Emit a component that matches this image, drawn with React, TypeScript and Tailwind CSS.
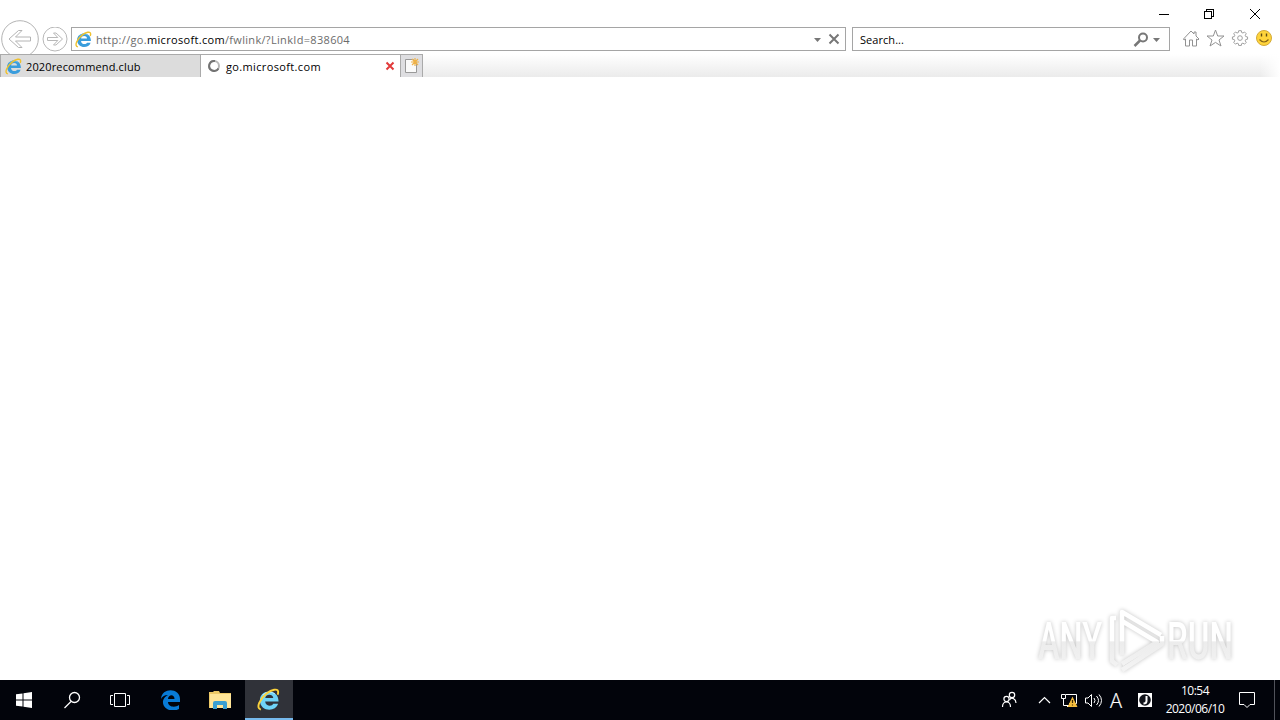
import type { ReactNode } from "react";

function IeIcon({ size, bright = false }: { size: number; bright?: boolean }) {
  const blue = bright ? "#6fd3f7" : "#3a9ddc";
  return (
    <svg width={size} height={size} viewBox="0 0 24 24" fill="none" className="shrink-0">
      <path
        d="M22.500 14H8.500C9 19 15.500 19.800 17 16.500H22C19.500 25.500 3 25 3 12.800C3 .500 22.500 0 22.500 14ZM8.600 10.500H17C16.500 6 9.200 6 8.600 10.500Z"
        fill={blue}
        fillRule="evenodd"
      />
      <path d="M6 7.500C9 4 15 3.500 18.500 6" stroke={bright ? "#b5ecff" : "#68bdec"} strokeWidth="1.2" />
      <path
        d="M4 22.5C-2 21 3.500 11 10 5.800C15.500 1.500 21.500 .3 22 3.500C22.200 4.600 22 6 21.500 7"
        stroke={bright ? "#fbd23c" : "#efc12d"}
        strokeWidth="2"
      />
    </svg>
  );
}

function Header() {
  return (
    <header className="h-[54px] bg-white">
      <div className="flex h-[27px] justify-end">
        <svg width="122" height="27" viewBox="-4 0 122 27" fill="none" stroke="#000" shapeRendering="crispEdges">
          <path d="M-3 14.500H7" />
          <path d="M42.500 11.500h7v7h-7zM44.500 11v-2h7v7h-2" />
          <path d="M88 9l10 10M98 9L88 19" shapeRendering="auto" />
        </svg>
      </div>
      <div className="flex h-[27px] items-start">
        <div className="flex w-[71px] shrink-0">
          <svg width="40" height="34" viewBox="0 0 40 34" fill="none" stroke="#b4b4b4" className="-mt-[7px]">
            <circle cx="20" cy="19" r="18.300" />
            <path d="M9 19l9.500-8.500h3.500l-6.500 6.500h15v4h-15l6.500 6.500h-3.500z" />
          </svg>
          <svg width="30" height="27" viewBox="0 0 30 27" fill="none" stroke="#b8b8b8">
            <circle cx="15" cy="12" r="12" />
            <path d="M22.500 12l-6.500-6h-2.500l4.300 4.500H7.500v3h10.300L13.500 18H16z" />
          </svg>
        </div>
        <div className="flex h-6 w-[775px] shrink-0 items-center border border-[#a5a5a5] pl-[3px]">
          <IeIcon size={17} />
          <span className="ml-1 mt-0.5 whitespace-nowrap text-[11px] tracking-[0.32px] text-[#6b6b6b]">
            http://go.<span className="text-black">microsoft.com</span>/fwlink/?LinkId=838604
          </span>
          <svg width="37" height="22" className="ml-auto" fill="none" stroke="#777">
            <path d="M6 10h7l-3.500 4z" fill="#777" stroke="none" />
            <path d="M21.500 6.500l9 9M30.500 6.500l-9 9" strokeWidth="2" />
          </svg>
        </div>
        <div className="ml-1.5 flex h-6 w-[318px] shrink-0 items-center border border-[#a5a5a5] pl-[7px] text-[11px] text-black">
          <span className="mt-0.5 tracking-[0.05px]">Search...</span>
          <svg width="42" height="22" className="ml-auto" fill="none" stroke="#777">
            <circle cx="16" cy="9.500" r="4" strokeWidth="2" />
            <path d="M13 12.500L7.500 18" strokeWidth="2.500" />
            <path d="M26 10h7l-3.500 4z" fill="#777" stroke="none" />
          </svg>
        </div>
        <Tools />
      </div>
    </header>
  );
}

function Tools() {
  return (
    <svg width="110" height="27" viewBox="0 0 110 27" fill="none" stroke="#929292">
      <path d="M13.500 12l7.500-8 3 3V5h2v4l3 3-1 1-1.500-1v7h-4v-6h-3v6h-4v-7l-1.500 1z" />
      <path d="M45.500 3l2.200 6h6.300l-5 4 2 6-5.500-3.600-5.500 3.600 2-6-5-4h6.300z" />
      <g transform="translate(70 10.200) scale(.87)">
        <path d="M-1.500-7.500h3l.4 2.100 1.500.6 1.800-1.200 2 2-1.200 1.800.6 1.500 2.100.4v2.600l-2.100.4-.6 1.500 1.200 1.800-2 2-1.800-1.200-1.500.6-.4 2.100h-3l-.4-2.100-1.500-.6-1.800 1.200-2-2L-6 4.200l-.6-1.500-2.100-.4V-.3l2.100-.4.600-1.500L-7.200-4l2-2 1.800 1.200 1.500-.6z" />
        <circle cy="1" r="2.700" />
      </g>
      <circle cx="94" cy="11" r="7.500" fill="#ffd43b" stroke="#d3aa3a" />
      <path d="M91.500 6.500v3M96.500 6.500v3" stroke="#604b12" strokeWidth="1.400" />
      <path d="M89.500 12.500q4.500 5 9 0" stroke="#866416" strokeWidth="1.200" />
    </svg>
  );
}

function TabBar() {
  return (
    <div className="relative flex h-[23px] bg-linear-to-b from-white to-[#ebebeb] text-[11px] text-black">
      <div className="absolute right-0 h-full w-5 bg-linear-to-r from-transparent to-white" />
      <div className="flex w-[201px] items-center border border-b-0 border-[#aaa] bg-[#dcdcdc] pl-1">
        <IeIcon size={17} />
        <span className="ml-1 mt-[3px] tracking-[0.14px]">2020recommend.club</span>
      </div>
      <div className="flex w-[199px] items-center border-t border-[#aaa] bg-white pl-1.5">
        <svg width="14" height="14" fill="none" strokeWidth="2">
          <circle cx="7" cy="7" r="5" stroke="#b8b8b8" />
          <path d="M8 2A5 5 0 1 0 11.500 9.500" stroke="#737373" />
        </svg>
        <span className="ml-[5px] mt-[3px] tracking-[0.36px]">go.microsoft.com</span>
        <svg width="10" height="10" className="ml-auto mr-[5px]" stroke="#e23a3a" strokeWidth="2">
          <path d="M1.500 1.500l7 7M8.500 1.500l-7 7" />
        </svg>
      </div>
      <div className="w-[23px] border border-b-0 border-[#aaa] bg-[#dedee1]">
        <svg width="21" height="22" fill="none">
          <path d="M4.500 4.500h8l3 3v10h-11z" fill="#fafafa" stroke="#999" />
          <path d="M14 3v8M10 7h8M11 4l6 6M17 4l-6 6" stroke="#efb248" strokeWidth="1.200" />
        </svg>
      </div>
    </div>
  );
}

function Watermark() {
  return (
    <svg
      width="220"
      height="78"
      viewBox="0 0 220 78"
      className="mr-[29px] overflow-visible drop-shadow-[0_0_2px_rgba(0,0,0,0.24)]"
    >
      <defs>
        <linearGradient id="wm" x1="0" y1="0" x2="0" y2="78" gradientUnits="userSpaceOnUse">
          <stop offset="0.500" stopColor="#fff" />
          <stop offset="0.510" stopColor="#ececec" />
          <stop offset="0.850" stopColor="#f3f3f3" />
        </linearGradient>
      </defs>
      <g fill="url(#wm)" className="font-['Roboto',sans-serif] text-[52px] font-medium">
        <text x="7" y="57" textLength="64" lengthAdjust="spacingAndGlyphs">ANY</text>
        <text x="136" y="57" textLength="66" lengthAdjust="spacingAndGlyphs">RUN</text>
      </g>
      <g fill="none" stroke="url(#wm)" strokeWidth="4.500" strokeLinejoin="round">
        <path d="M85 16h-4v43l5 4M91 53V10l39 23M91 19l35 21-35 22M91 68l40-26v-8" />
      </g>
    </svg>
  );
}

function Slot({ children, active = false }: { children: ReactNode; active?: boolean }) {
  return (
    <div className={active ? "flex w-12 items-center justify-center border-b-2 border-[#76b9ed] bg-[#303239] pr-0.5" : "flex w-12 items-center justify-center"}>
      {children}
    </div>
  );
}

function Taskbar() {
  return (
    <footer className="flex h-10 bg-[#02040b] text-white">
      <Slot>
        <svg width="16" height="16" fill="#fff">
          <path d="M0 2.300l6.500-.9v6.100H0zM7.500 1.200L16 0v7.500H7.500zM0 8.500h6.500v6.100L0 13.700zM7.500 8.500H16V16l-8.500-1.200z" />
        </svg>
      </Slot>
      <Slot>
        <svg width="18" height="18" fill="none" stroke="#fff" strokeWidth="1.300">
          <circle cx="11.500" cy="6.500" r="5" />
          <path d="M8 10.500L1.500 17" />
        </svg>
      </Slot>
      <Slot>
        <svg width="20" height="16" fill="none" stroke="#fff">
          <path d="M4.500 1.500h11v13h-11zM3 3.500H.5v9H3M17 3.500h2.500v9H17" />
        </svg>
      </Slot>
      <div className="ml-[3px] flex">
        <Slot>
          <svg width="20" height="20" viewBox="0 0 20 20" fill="#087bd6">
            <path d="M0 9C1-3 19-2 19 9v3H7c0 5 7 6 11 3v4C11 23 1 19 2 11c.5-3 3-5 5-6-4 0-6 2-7 4zm7 0h6.500c0-5-6-5-6.500 0z" />
          </svg>
        </Slot>
      </div>
      <div className="ml-px flex">
        <Slot>
          <svg width="22" height="18">
            <path d="M0 1h4l1-1h5l1 2h11v15H0z" fill="#edc967" />
            <path d="M1 3h21v14H1z" fill="#ffe598" />
            <path d="M4 18v-6q0-2 2-2h10q2 0 2 2v6h-4v-4H8v4z" fill="#399fd2" />
          </svg>
        </Slot>
      </div>
      <div className="ml-px flex">
        <Slot active>
          <IeIcon size={23} bright />
        </Slot>
      </div>
      <Tray />
    </footer>
  );
}

function Tray() {
  return (
    <div className="ml-auto flex items-center">
      <svg width="162" height="40" viewBox="0 0 162 40" fill="none" stroke="#fff" strokeWidth="1.200">
        <circle cx="12" cy="15" r="2.700" />
        <circle cx="6.500" cy="19" r="2.600" />
        <path d="M2.500 27q0-5 4-5t4 5M9.500 20q2-3 4.200-1.200Q16 20 16 23" />
        <path d="M39 23l5.500-5.500L50 23" />
        <path d="M66 14.500h10.500v9H69M61.500 14.500h4v4h-4zM63.500 18.500v7h7M67 26.500h6" strokeWidth="1" />
        <path d="M72.500 18l4 8.500h-8z" fill="#f5bd3d" stroke="#f5bd3d" />
        <path d="M72.500 20v3M72.500 24.500v1" stroke="#3f2b00" />
        <path d="M85.500 18h2.500l3.500-3.500v12L88 23h-2.500z" strokeWidth="1" />
        <path d="M94 18q2 2.500 0 5M96.500 16q4 4.500 0 9M99 14.500q5 6 0 12" strokeWidth="1" />
        <path d="M138 13h14v14h-14z" fill="#fff" stroke="none" />
        <circle cx="145" cy="20" r="5.800" fill="#11131a" stroke="none" />
        <path d="M146.500 16v5q0 2.500-3 2.500" stroke="#fff" strokeWidth="2" />
        <text x="110" y="28" fill="#fff" stroke="#fff" strokeWidth="0.200" className="font-['Open_Sans',sans-serif] text-[20px] font-light">A</text>
      </svg>
      <div className="w-[66px] text-center text-[12px] leading-[18px] tracking-[-0.5px]">
        <div>10:54</div>
        <div>2020/06/10</div>
      </div>
      <svg width="46" height="40" viewBox="-4 0 46 40" fill="none" stroke="#fff">
        <path d="M7.500 12.500h15v12H18l-3 3-3-3H7.500z" />
      </svg>
      <div className="h-full w-[6px] border-l border-[#50525a]" />
    </div>
  );
}

export default function App() {
  return (
    <div className="flex h-[720px] w-[1280px] flex-col overflow-hidden bg-white font-['Open_Sans','Noto_Sans',sans-serif]">
      <Header />
      <TabBar />
      <main className="flex flex-1 items-end justify-end">
        <Watermark />
      </main>
      <Taskbar />
    </div>
  );
}
